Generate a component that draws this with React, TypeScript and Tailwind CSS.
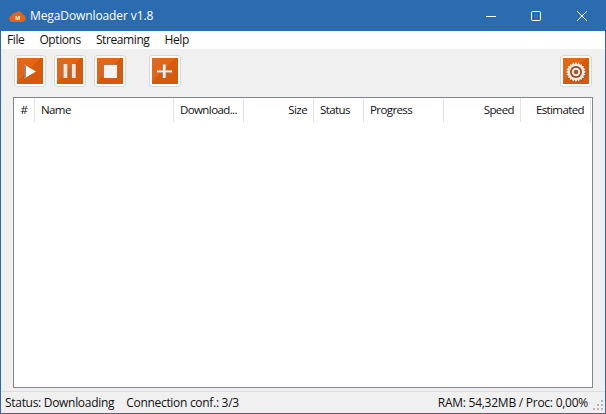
import type { ReactNode } from "react";

const font = { fontFamily: '"Open Sans", sans-serif' };

function gearPath(cx: number, cy: number, outer: number, inner: number, teeth: number) {
  const pts: string[] = [];
  for (let i = 0; i < teeth * 2; i++) {
    const r = i % 2 === 0 ? outer : inner;
    const a = (i / (teeth * 2)) * Math.PI * 2;
    pts.push(`${(cx + r * Math.cos(a)).toFixed(2)} ${(cy + r * Math.sin(a)).toFixed(2)}`);
  }
  return `M${pts.join("L")}Z`;
}

function ToolButton({ children, className = "" }: { children: ReactNode; className?: string }) {
  return (
    <div className={`w-[32px] h-[32px] rounded-[3px] border border-[#d9d9d9] bg-white p-[2px] ${className}`}>
      <div className="relative w-full h-full overflow-hidden">
        <div className="absolute inset-0 bg-[linear-gradient(135deg,#e2691a_0%,#e06517_45%,#d75a0c_46%,#d75a0c_100%)]" />
        <svg viewBox="0 0 26 26" className="relative w-[26px] h-[26px]">
          {children}
        </svg>
      </div>
    </div>
  );
}

const columns = [
  { label: "#", width: "w-[21px]", align: "text-center" },
  { label: "Name", width: "w-[139px]", align: "text-left" },
  { label: "Download...", width: "w-[70px]", align: "text-left" },
  { label: "Size", width: "w-[70px]", align: "text-right" },
  { label: "Status", width: "w-[50px]", align: "text-left" },
  { label: "Progress", width: "w-[80px]", align: "text-left" },
  { label: "Speed", width: "w-[77px]", align: "text-right" },
  { label: "Estimated", width: "w-[70px]", align: "text-right" },
];

export default function App() {
  return (
    <div className="w-[606px] h-[414px] flex flex-col bg-[#f0f0f0] border-x border-b border-[#2b6cb0] text-[12px] text-[#111] overflow-hidden tracking-[-0.25px]" style={font}>
      <div className="h-[31px] -mx-px bg-[#2b6cb0] flex items-center text-white shrink-0">
        <svg viewBox="0 0 16 12" className="w-[17px] h-[13px] ml-[9px]">
          <path d="M3 12a3 3 0 0 1-.6-5.9A3.6 3.6 0 0 1 6 3.5 4 4 0 0 1 13 5.4 3.4 3.4 0 0 1 13 12Z" fill="#e0641b" />
          <text x="8" y="10" fontSize="5" fontWeight="700" fill="#fff" textAnchor="middle">M</text>
        </svg>
        <span className="ml-[4px] text-[12px] tracking-[-0.1px]">MegaDownloader v1.8</span>
        <div className="ml-auto flex items-center">
          <svg viewBox="0 0 10 10" className="w-[10px] h-[10px] mr-[35px]"><path d="M0 5.5h10" stroke="#fff" strokeWidth="1" /></svg>
          <svg viewBox="0 0 10 10" className="w-[10px] h-[10px] mr-[36px]"><rect x=".5" y=".5" width="9" height="9" rx="1" fill="none" stroke="#fff" /></svg>
          <svg viewBox="0 0 10 10" className="w-[10px] h-[10px] mr-[19px]"><path d="M0 0l10 10M10 0L0 10" stroke="#fff" strokeWidth="1" /></svg>
        </div>
      </div>
      <div className="h-[18px] -mx-px bg-white flex items-center pl-[7px] gap-[15px] shrink-0 tracking-[-0.4px]">
        <span>File</span>
        <span>Options</span>
        <span>Streaming</span>
        <span>Help</span>
      </div>
      <div className="h-[48px] flex items-start pt-[6px] pl-[13px] pr-[13px] shrink-0">
        <ToolButton>
          <path d="M7 6.5 19 13.5 7 20.5Z" fill="#ffffff" />
          <path d="M7 6.5 9 7.67V19.33L7 20.5Z" fill="#9a8476" />
        </ToolButton>
        <ToolButton className="ml-[8px]">
          <path d="M5.3 6h5v14h-5ZM13.7 6h5v14h-5Z" fill="#a9785a" />
          <path d="M6.6 6h3.7v14H6.6ZM15 6h3.7v14H15Z" fill="#f1e3d6" />
        </ToolButton>
        <ToolButton className="ml-[8px]">
          <rect x="6" y="6" width="14" height="14" fill="#a9785a" />
          <rect x="7" y="7" width="13" height="13" fill="#f6f2ee" />
        </ToolButton>
        <ToolButton className="ml-[23px]">
          <path d="M10 6h4.5v6H20.5v3.5H14.5V20H10v-4.5H4.5V12H10Z" fill="#a78a78" opacity="0.75" />
          <path d="M11 6.5h2.5V12.5H20v1.8H13.5V20H11v-5.7H5v-1.8h6Z" fill="#f7f2ee" />
        </ToolButton>
        <ToolButton className="ml-auto">
          <path d={gearPath(13.6, 14.6, 10, 8.2, 20)} fill="#8d4a20" />
          <path d={gearPath(13, 14, 10, 8.2, 20)} fill="#f2ebe5" />
          <circle cx="13" cy="14" r="6" fill="#8d4a20" />
          <circle cx="13" cy="14" r="4.3" fill="#f2ebe5" />
          <circle cx="13" cy="14" r="2.3" fill="#a8582a" />
        </ToolButton>
      </div>
      <div className="h-[291px] mx-[12px] border border-[#82878f] bg-white shrink-0">
        <div className="flex h-[24px] text-[11.5px] tracking-[-0.6px]">
          {columns.map((col) => (
            <div key={col.label} className={`${col.width} ${col.align} shrink-0 px-[6px] pt-[3px] border-r border-[#e5e5e5] whitespace-nowrap`}>
              {col.label}
            </div>
          ))}
        </div>
      </div>
      <div className="mt-[3px] border-t border-[#dcdcdc] flex-1 flex items-center pl-[4px] relative">
        <span className="tracking-[-0.3px]">Status: Downloading</span>
        <span className="ml-[12px] tracking-[-0.3px]">Connection conf.: 3/3</span>
        <span className="ml-auto mr-[17px]">RAM: 54,32MB / Proc: 0,00%</span>
        <svg viewBox="0 0 12 12" className="absolute right-[1px] bottom-[2px] w-[12px] h-[12px]">
          <path d="M9 1h2v2H9ZM5 5h2v2H5ZM9 5h2v2H9ZM1 9h2v2H1ZM5 9h2v2H5ZM9 9h2v2H9Z" fill="#b5b5b5" />
        </svg>
      </div>
    </div>
  );
}
